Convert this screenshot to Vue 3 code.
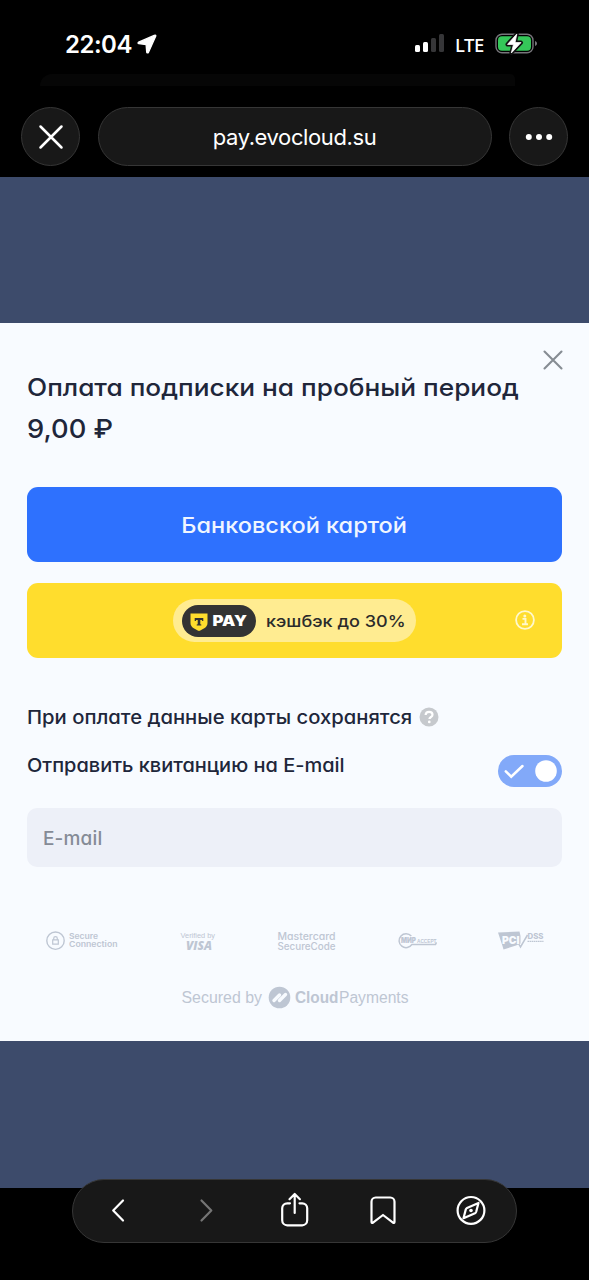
<script setup>
const bars = [
  { h: 7, on: true },
  { h: 10.5, on: true },
  { h: 14.5, on: false },
  { h: 18.5, on: false },
]
</script>

<template>
  <div class="screen">
    <header class="top">
      <div class="status">
        <span class="time">22:04</span>
        <svg class="arrow" width="20" height="20" viewBox="0 0 20 20"><path d="M17.800 1.200 1.600 8.200c-.8.400-.7 1.400.2 1.500l7.300.8.6 7.700c.1.900 1.300 1 1.700.2l7.400-16.300c.2-.6-.4-1.200-1-.9Z" fill="#fff" stroke="#fff" stroke-width="1.300" stroke-linejoin="round"/></svg>
        <div class="signal">
          <i v-for="(b, n) in bars" :key="n" :class="{ on: b.on }" :style="{ height: b.h + 'px' }"></i>
        </div>
        <span class="lte">LTE</span>
        <svg class="battery" width="43" height="22" viewBox="0 0 43 22">
          <rect x="1" y="1.200" width="37" height="18.600" rx="6" fill="none" stroke="#76757a" stroke-width="1.400"/>
          <rect x="3" y="3.200" width="33" height="14.600" rx="4" fill="#35c759"/>
          <path d="M40 8v5c1.400-.4 2-1.400 2-2.500s-.6-2.100-2-2.500Z" fill="#76757a"/>
          <path d="M21.800 1 12.500 11.400h6L16.300 20 26 9.600h-6Z" fill="#fff" stroke="#111" stroke-width="4" stroke-linejoin="round"/>
          <path d="M21.800 1 12.500 11.400h6L16.300 20 26 9.600h-6Z" fill="#fff" stroke="#fff" stroke-width=".8" stroke-linejoin="round"/>
        </svg>
      </div>
      <div class="shade"></div>
      <div class="nav">
        <button class="round"><svg width="26" height="26" viewBox="0 0 26 26"><path d="M2.500 2.500 23.500 23.500M23.500 2.500 2.500 23.500" stroke="#fff" stroke-width="2.500" stroke-linecap="round"/></svg></button>
        <div class="address"><span>pay.evocloud.su</span></div>
        <button class="round"><svg width="28" height="8" viewBox="0 0 28 8" fill="#fff"><circle cx="3.800" cy="4" r="3"/><circle cx="14" cy="4" r="3"/><circle cx="24.200" cy="4" r="3"/></svg></button>
      </div>
    </header>

    <main class="page">
      <section class="sheet">
        <svg class="close" width="22" height="22" viewBox="0 0 22 22"><path d="M2.500 2.500l17 17m0-17-17 17" stroke="#868c93" stroke-width="2.100" stroke-linecap="round"/></svg>
        <h1><span class="wide">Оплата подписки на пробный период</span></h1>
        <p class="amount"><span class="wide">9,00 ₽</span></p>

        <button class="card"><span class="wide">Банковской картой</span></button>
        <button class="tpay">
          <span class="pill">
            <svg width="74" height="32" viewBox="0 0 74 32">
              <rect width="74" height="32" rx="16" fill="#333"/>
              <path d="M8.500 8.500h17V18c0 4-3.500 5.700-8.500 8-5-2.300-8.500-4-8.500-8Z" fill="#ffdd2d"/>
              <path d="M12.700 13h8.600v3h-1.100l-.5-.9h-1.400v4.100l1 .4v1h-4.600v-1l1-.4v-4.100h-1.400l-.5.900h-1.100Z" fill="#333"/>
              <text x="30.500" y="21.200" class="pay-word" textLength="34.500" lengthAdjust="spacingAndGlyphs">PAY</text>
            </svg>
            <span class="cashback wide">кэшбэк до 30%</span>
          </span>
          <svg class="info" width="22" height="22" viewBox="0 0 22 22"><circle cx="11" cy="11" r="8.900" fill="none" stroke="#fff8cc" stroke-width="1.800"/><circle cx="10.800" cy="6.900" r="1.500" fill="#fff8cc"/><path d="M8.500 9.900h3v5M8 15.200h6" fill="none" stroke="#fff8cc" stroke-width="1.900"/></svg>
        </button>

        <div class="saved">
          <span class="wide">При оплате данные карты сохранятся</span>
          <svg width="20" height="20" viewBox="0 0 20 20"><circle cx="10" cy="10" r="9.500" fill="#c6c9cd"/><path d="M6.600 8C6.700 5.900 8.100 4.800 10.100 4.800s3.400 1 3.400 2.900c0 2.300-3 2.200-3.100 4.300" fill="none" stroke="#fff" stroke-width="2.200"/><circle cx="10.300" cy="14.900" r="1.350" fill="#fff"/></svg>
        </div>
        <div class="receipt">
          <span class="wide">Отправить квитанцию на E-mail</span>
          <svg width="64" height="32" viewBox="0 0 64 32"><rect width="64" height="32" rx="16" fill="#82a9f9"/><circle cx="48" cy="16" r="10.800" fill="#fff"/><path d="m7.800 16.400 5.400 5.300L24.500 11" fill="none" stroke="#fff" stroke-width="2.500" stroke-linecap="round"/></svg>
        </div>
        <div class="email"><span>E-mail</span></div>

        <div class="badges">
          <svg width="74" height="22" viewBox="0 0 74 22" class="gray">
            <circle cx="10.500" cy="10.700" r="8.700" fill="none" stroke="#bec6d3" stroke-width="1.400"/>
            <path d="M7.700 9.900h5.600v4.200H7.700zM8.700 9.900V8.500a1.800 1.800 0 0 1 3.600 0v1.400" fill="none" stroke="#bec6d3" stroke-width="1.200"/>
            <text x="24" y="9.300" class="secure" textLength="29" lengthAdjust="spacingAndGlyphs">Secure</text>
            <text x="24" y="17.300" class="secure" textLength="48.500" lengthAdjust="spacingAndGlyphs">Connection</text>
          </svg>
          <svg class="verified-by gray" width="38" height="26" viewBox="0 0 38 26">
            <text x="1.500" y="8.300" class="verified" textLength="34.500" lengthAdjust="spacingAndGlyphs">Verified by</text>
            <text x="7" y="20" class="visa" textLength="26" lengthAdjust="spacingAndGlyphs">VISA</text>
          </svg>
          <svg width="60" height="24" viewBox="0 0 60 24" class="gray">
            <text x="1.500" y="9.500" class="mastercard" textLength="58" lengthAdjust="spacingAndGlyphs">Mastercard</text>
            <text x="1.500" y="20" class="mastercard" textLength="58" lengthAdjust="spacingAndGlyphs">SecureCode</text>
          </svg>
          <svg class="mir-accept gray" width="42" height="22" viewBox="0 0 42 22">
            <path d="M14.300 6A7 7 0 1 0 15 14.400H38.500l1-2" fill="none" stroke="#bec6d3" stroke-width="1.500"/>
            <text x="4" y="13" class="mir" textLength="15" lengthAdjust="spacingAndGlyphs">МИР</text>
            <text x="20" y="12.800" class="accept" textLength="19.500" lengthAdjust="spacingAndGlyphs">ACCEPT</text>
          </svg>
          <svg width="48" height="22" viewBox="0 0 48 22" class="gray">
            <path d="M1 2.500 22.500 1.500 23.500 6V13.500L19 15.500 6.500 19.500 5.500 16Z"/>
            <path d="m21.500 13.500 2 3.500L30.500 5" fill="none" stroke="#bec6d3" stroke-width="1.500"/>
            <text x="5" y="14" class="pci" textLength="17.500" lengthAdjust="spacingAndGlyphs">PCI</text>
            <text x="30.500" y="9" class="dss" textLength="16" lengthAdjust="spacingAndGlyphs">DSS</text>
            <path d="M30.500 11.300h16" stroke="#bec6d3" stroke-width="1.200" stroke-dasharray="1.600 .5"/>
          </svg>
        </div>

        <svg class="secured gray" width="230" height="26" viewBox="0 0 230 26">
          <text x="1.500" y="18.300" class="by" textLength="80.500" lengthAdjust="spacingAndGlyphs">Secured by</text>
          <circle cx="99.500" cy="12.500" r="10.800"/>
          <path d="m94 15.500 5.500-5.500M99.500 15.500l6-6" stroke="#f8fbff" stroke-width="3.400" stroke-linecap="round"/>
          <text x="115" y="18.300" class="cloud" textLength="43.500" lengthAdjust="spacingAndGlyphs">Cloud</text>
          <text x="159" y="18.300" class="by" textLength="69.500" lengthAdjust="spacingAndGlyphs">Payments</text>
        </svg>
      </section>
    </main>

    <nav class="toolbar">
      <svg width="32" height="40" viewBox="0 0 32 40"><path d="M21 9.500 11.200 19.500 21 29.500"/></svg>
      <svg width="32" height="40" viewBox="0 0 32 40" class="dim"><path d="M11.500 9.500 21.300 19.500l-9.800 10"/></svg>
      <svg width="32" height="40" viewBox="0 0 32 40"><path d="M11 12.300H8.200a5 5 0 0 0-5 5v12a5 5 0 0 0 5 5h15a5 5 0 0 0 5-5v-12a5 5 0 0 0-5-5H20.500M15.700 22V4M10.500 8.200 15.700 3l5.200 5.200"/></svg>
      <svg width="32" height="40" viewBox="0 0 32 40"><path d="M4.500 31V10.700a4.200 4.200 0 0 1 4.200-4.200h14.600a4.200 4.200 0 0 1 4.200 4.200v20.300c0 1-.9 1.200-1.500.7L16 24 6 31.700c-.6.500-1.500.3-1.500-.7Z"/></svg>
      <svg width="32" height="40" viewBox="0 0 32 40"><circle cx="16" cy="19.400" r="13.400"/><path d="m23.500 11.900-2.300 8.800c-.2.700-.6 1.200-1.200 1.500l-11.500 5 2.300-8.800c.2-.7.600-1.200 1.200-1.500Z"/><circle cx="16" cy="19.500" r="1.800" class="dot"/></svg>
    </nav>
  </div>
</template>

<style>
body { background: #000; }
</style>

<style scoped>
* { box-sizing: border-box; }
.screen {
  position: relative;
  width: 589px;
  height: 1280px;
  overflow: hidden;
  background: #000;
  font-family: Inter, "Liberation Sans", sans-serif;
  font-feature-settings: "cv11";
}
button { border: 0; padding: 0; font: inherit; font-feature-settings: inherit; }
span { white-space: nowrap; }
svg { display: block; flex: none; }
.wide { display: inline-block; transform: scaleX(1.094); transform-origin: left; }
.top { height: 177px; color: #fff; font-feature-settings: normal; }
.status { display: flex; align-items: center; height: 77px; padding: 11px 51px 0 65px; }
.time { font-size: 24px; font-weight: 600; letter-spacing: -.5px; }
.arrow { margin-left: 5px; }
.signal { display: flex; align-items: flex-end; gap: 3px; height: 19px; margin: -3px 0 0 auto; }
.signal i { width: 5px; border-radius: 1.500px; background: #363638; }
.signal i.on { background: #fff; }
.lte { margin-left: 11px; font: 500 18.500px "Noto Sans", sans-serif; letter-spacing: -.4px; }
.battery { margin-left: 11px; }
.shade { height: 12px; margin: -3px 74px 0 40px; background: #060606; border-radius: 20px 8px 0 0; }
.nav { display: flex; justify-content: space-between; padding: 21px 21px 0; }
.round { width: 59px; height: 59px; display: grid; place-items: center; border: 1px solid #363636; border-radius: 50%; background: #181818; }
.address { width: 394px; height: 59px; display: grid; place-items: center; border: 1px solid #363636; border-radius: 30px; background: #181818; font-size: 22px; letter-spacing: -.4px; }
.page { height: 1011px; padding-top: 146px; background: #3d4b6b; }
.sheet { position: relative; height: 718px; padding: 44px 27px 0; background: #f8fbff; color: #20263a; }
.close { position: absolute; right: 25px; top: 26px; }
h1 { margin: 0; font-size: 24px; font-weight: 500; line-height: 41px; }
.amount { margin: 0 0 38px; font-size: 26px; font-weight: 500; line-height: 41px; }
.amount .wide { transform: scaleX(1.05); }
.card { display: grid; place-items: center; width: 535px; height: 75px; border-radius: 11px; background: #2e71fe; color: #f0f6ff; font-size: 21.500px; font-weight: 500; }
.card .wide { transform-origin: center; }
.tpay { position: relative; display: grid; place-items: center; width: 535px; height: 75px; margin-top: 21px; border-radius: 11px; background: #ffdd2d; }
.pill { display: flex; align-items: center; width: 243px; height: 43px; padding-left: 9px; border-radius: 22px; background: #ffec91; color: #2b2b2b; }
.pay-word { font: 900 14.500px Inter, sans-serif; fill: #fff; }
.cashback { margin-left: 10px; font-size: 16.500px; font-weight: 500; }
.info { position: absolute; right: 26px; top: 26px; }
.saved { display: flex; align-items: center; height: 24px; margin-top: 47px; font-size: 18.500px; font-weight: 500; }
.saved svg { margin-left: 40px; }
.receipt { display: flex; justify-content: space-between; height: 32px; margin-top: 26px; font-size: 18.500px; font-weight: 500; line-height: 21px; }
.receipt .wide { height: 21px; transform: scaleX(1.080); }
.email { display: flex; align-items: center; height: 59px; margin-top: 21px; padding-left: 16px; border-radius: 10px; background: #edf0f8; color: #858b96; font-size: 19px; font-weight: 500; }
.email span { margin-top: 1px; letter-spacing: .15px; }
.badges { display: flex; justify-content: space-between; height: 26px; margin: 63px 17px 0 18px; }
.verified-by { margin-left: 2px; }
.mir-accept { margin-left: 3px; }
.gray { fill: #bec6d3; }
.secure { font: 600 7.800px Inter, sans-serif; font-feature-settings: "cv11"; }
.verified { font: 400 7.500px "Liberation Sans", sans-serif; }
.visa { font: italic 800 12px "Open Sans", sans-serif; }
.mastercard { font: 500 10px Inter, sans-serif; font-feature-settings: "cv11"; }
.mir { font: 900 7.500px Inter, sans-serif; }
.accept { font: 700 5.500px "Liberation Sans", sans-serif; }
.pci { font: 900 10.500px Inter, sans-serif; fill: #f8fbff; }
.dss { font: 800 7.500px Inter, sans-serif; }
.secured { margin: 29px auto 0; }
.by { font: 400 16px "Liberation Sans", sans-serif; }
.cloud { font: 700 16px "Liberation Sans", sans-serif; }
.toolbar { position: absolute; left: 72px; top: 1179px; display: flex; align-items: center; justify-content: space-between; width: 445px; height: 64px; padding: 0 29px; border: 1px solid #363636; border-radius: 32px; background: #181818; }
.toolbar svg { fill: none; stroke: #fff; stroke-width: 2.200; stroke-linecap: round; stroke-linejoin: round; }
.toolbar .dim { stroke: #757575; }
.toolbar .dot { fill: #fff; stroke: none; }
</style>
